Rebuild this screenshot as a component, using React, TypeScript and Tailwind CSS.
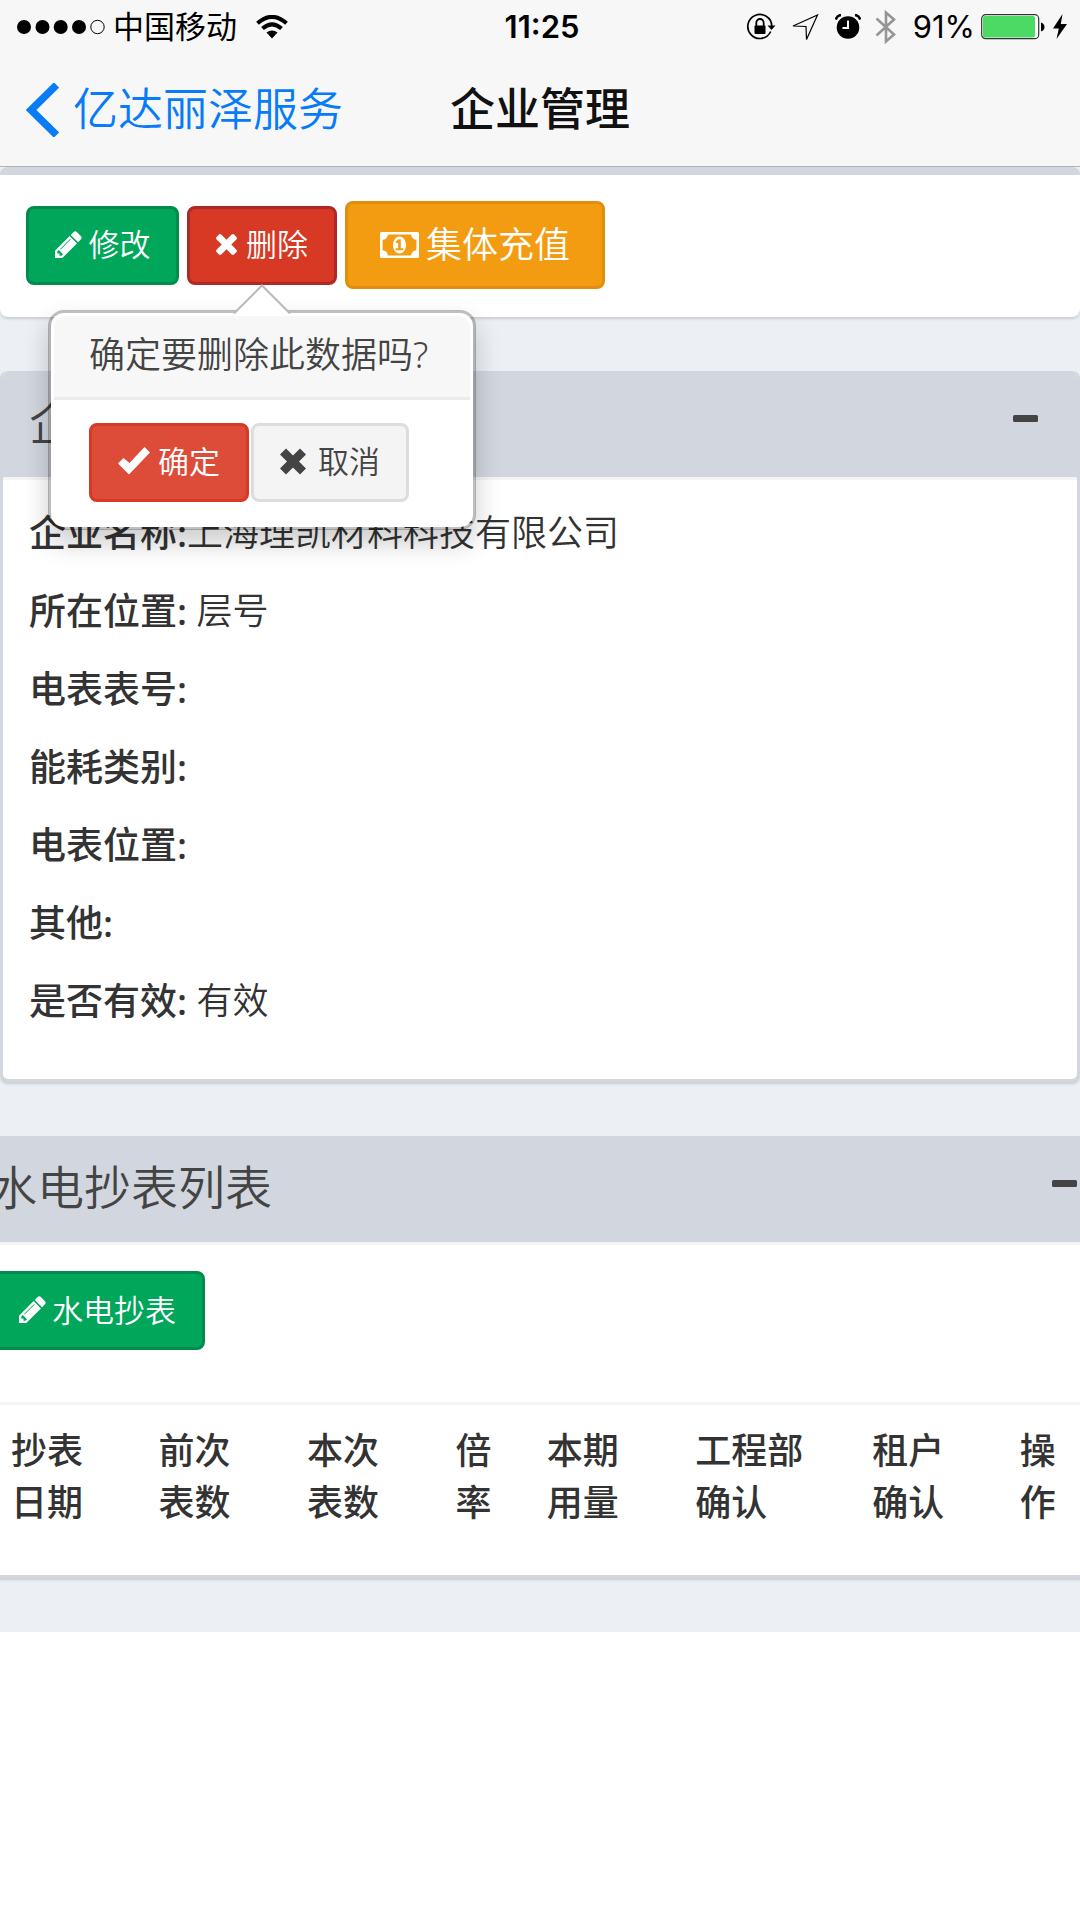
import type { ReactNode } from "react";
import { useState } from "react";

const PENCIL =
  "M491 1536l91-91-235-235-91 91v107h128v128h107zm523-928q0-22-22-22-10 0-17 7l-542 542q-7 7-7 17 0 22 22 22 10 0 17-7l542-542q7-7 7-17zm-54-192l416 416-832 832h-416v-416zm683 96q0 53-37 90l-166 166-416-416 166-165q36-38 90-38 53 0 91 38l235 234q37 39 37 91z";
const TIMES =
  "M1490 1322q0 40-28 68l-136 136q-28 28-68 28t-68-28l-294-294-294 294q-28 28-68 28t-68-28l-136-136q-28-28-28-68t28-68l294-294-294-294q-28-28-28-68t28-68l136-136q28-28 68-28t68 28l294 294 294-294q28-28 68-28t68 28l136 136q28 28 28 68t-28 68l-294 294 294 294q28 28 28 68z";
const MONEY =
  "M768 1152h384v-96h-128v-448h-114l-148 137 77 80q42-37 55-57h2v288h-128v96zm512-256q0 70-21 142t-59.5 134-101.5 101-138 39-138-39-101.5-101-59.5-134-21-142 21-142 59.5-134 101.5-101 138-39 138 39 101.5 101 59.5 134 21 142zm512 256v-512q-106 0-181-75t-75-181h-1152q0 106-75 181t-181 75v512q106 0 181 75t75 181h1152q0-106 75-181t181-75zm128-832v1152q0 26-19 45t-45 19h-1792q-26 0-45-19t-19-45v-1152q0-26 19-45t45-19h1792q26 0 45 19t19 45z";

function PencilIcon() {
  return (
    <svg viewBox="128 128 1536 1536" className="h-[27px] w-[27px]" fill="currentColor" aria-hidden="true">
      <path d={PENCIL} />
    </svg>
  );
}

function StatusBar() {
  return (
    <div className="grid h-[54px] grid-cols-[1fr_auto_1fr] items-center pl-[17px] pr-[13px] text-[31px] text-black">
      <div className="flex items-center">
        <svg width="90" height="16" viewBox="0 0 90 16" aria-label="信号">
          <circle cx="7" cy="8" r="7" />
          <circle cx="25.5" cy="8" r="7" />
          <circle cx="43.7" cy="8" r="7" />
          <circle cx="62" cy="8" r="7" />
          <circle cx="80.5" cy="8" r="6.7" fill="none" stroke="#000" strokeWidth="1" />
        </svg>
        <span className="ml-[6px]">中国移动</span>
        <svg className="ml-[19px]" width="32" height="24" viewBox="0 0 32 24" aria-label="Wi-Fi">
          <g fill="none" stroke="#000" strokeWidth="4">
            <path d="M1.500 8.300Q16-4.600 30.500 8.300" />
            <path d="M6.500 13.500Q16 5.200 25.500 13.500" />
          </g>
          <path d="M10.500 17.500Q16 13.500 21.500 17.500L16 23.500Z" />
        </svg>
      </div>
      <span className="font-semibold">11:25</span>
      <div className="flex items-center justify-end">
        <svg width="30" height="28" viewBox="0 0 30 28" aria-label="方向锁定">
          <path d="M24.700 18.500A12 12 0 1 1 25.800 13" fill="none" stroke="#000" strokeWidth="1.700" />
          <path d="M21.500 12.500h8l-4 4.500z" />
          <rect x="8.500" y="12.500" width="11" height="8.500" rx="1" />
          <path d="M10.300 13v-3a3.700 4 0 0 1 7.400 0v3" fill="none" stroke="#000" strokeWidth="1.800" />
        </svg>
        <svg className="ml-[16px]" width="27" height="27" viewBox="0 0 27 27" aria-label="定位">
          <path d="M1 12L25.500 1L14.500 25.500L14 12.500Z" fill="none" stroke="#000" strokeWidth="1.200" />
        </svg>
        <svg className="ml-[16px]" width="26" height="26" viewBox="0 0 26 26" aria-label="闹钟">
          <circle cx="13" cy="13.500" r="11.300" />
          <path d="M.8 5.600Q2 1.500 6 1M25.200 5.600Q24 1.500 20 1" fill="none" stroke="#000" strokeWidth="2.600" />
          <path d="M13 6.500v7.500H7.500" fill="none" stroke="#f7f7f7" strokeWidth="2" />
        </svg>
        <svg className="ml-[14px]" width="22" height="36" viewBox="0 0 22 36" aria-label="蓝牙">
          <path d="M1.500 9.500L19 25.500L11 32.500V3.500L19 10.500L1.500 26.500" fill="none" stroke="#959595" strokeWidth="2.600" />
        </svg>
        <span className="ml-[16px]">91%</span>
        <svg className="ml-[6px]" width="64" height="26" viewBox="0 0 64 26" aria-label="电池">
          <rect x=".7" y=".7" width="57" height="24" rx="4" fill="#fff" stroke="#333" strokeWidth="1.200" />
          <rect x="2" y="2" width="52" height="21.500" rx="2" fill="#4cd964" />
          <path d="M60 8.500q3.500 1 3.500 4.500t-3.500 4.500z" />
        </svg>
        <svg className="ml-[8px]" width="14" height="26" viewBox="0 0 14 26" aria-label="充电中">
          <path d="M9.500 0L0 14.500H5.800L3.500 25L14 10H7.800Z" />
        </svg>
      </div>
    </div>
  );
}

function NavBar() {
  return (
    <div className="grid h-[112px] grid-cols-[1fr_auto_1fr] items-center px-[26px] text-[45px]">
      <a href="#back" className="flex items-center gap-[14px] text-[#087cf7]">
        <svg width="33" height="54" viewBox="0 0 33 54" aria-hidden="true">
          <path d="M30.500 2L5 27L30.500 52" fill="none" stroke="currentColor" strokeWidth="7.500" />
        </svg>
        <span className="font-[350]">亿达丽泽服务</span>
      </a>
      <h1 className="font-medium text-[#111]">企业管理</h1>
    </div>
  );
}

function Card({ title, bleed, children }: { title: string; bleed?: boolean; children: ReactNode }) {
  const [open, setOpen] = useState(true);
  return (
    <section
      className={
        "overflow-hidden rounded-lg border-x-[3px] border-b-[3px] border-[#d2d6de] bg-white shadow-[0_2px_3px_rgba(0,0,0,0.15)] " +
        (bleed ? "-mx-[39px]" : "")
      }
    >
      <header className="flex h-[106px] items-center justify-between bg-[#d2d6de] px-[26px] pb-[4px] text-[#444]">
        <h2 className="text-[47px] leading-[52px]">{title}</h2>
        <button type="button" aria-label="折叠" onClick={() => setOpen(!open)} className="px-[12px] pb-[6px]">
          <svg width="26" height="8" viewBox="0 0 26 8" aria-hidden="true">
            <rect width="25" height="7" rx="1.500" fill="#444" />
          </svg>
        </button>
      </header>
      {open && <div className="border-t-[3px] border-[#f4f4f4] p-[26px]">{children}</div>}
    </section>
  );
}

function Popover({ onClose }: { onClose: () => void }) {
  return (
    <div
      role="dialog"
      aria-label="删除确认"
      className="absolute left-1/2 top-full z-10 mt-[25px] w-[428px] -translate-x-1/2 rounded-[16px] border-[3px] border-black/25 bg-white bg-clip-padding p-[3px] shadow-[0_13px_26px_rgba(0,0,0,0.2)]"
    >
      <svg
        className="absolute -top-[29px] left-1/2 -translate-x-1/2"
        width="58"
        height="32"
        viewBox="0 0 58 32"
        aria-hidden="true"
      >
        <path d="M2 29L29 2L56 29V32H2Z" fill="#fff" />
        <path d="M1 29.500L29 1.500L57 29.500" fill="none" stroke="#b9b9b9" strokeWidth="2" />
      </svg>
      <h3 className="rounded-t-[12px] border-b-[3px] border-[#ebebeb] bg-[#f7f7f7] px-[35px] pb-[16px] pt-[13px] text-[36px] leading-[52px] text-[#444]">
        确定要删除此数据吗?
      </h3>
      <div className="flex gap-[2px] px-[35px] pb-[22px] pt-[23px] text-[31px] leading-[46px]">
        <button
          type="button"
          onClick={onClose}
          className="flex h-[79px] w-[160px] items-center justify-center gap-[8px] rounded-lg border-[3px] border-[#d73925] bg-[#dd4b39] pb-[2px] text-white"
        >
          <svg width="32" height="28" viewBox="0 0 32 28" fill="currentColor" aria-hidden="true">
            <path d="M0 16.500L5.500 11L11.500 16L26.500 0L32 5.500L11 27.500Z" />
          </svg>
          确定
        </button>
        <button
          type="button"
          onClick={onClose}
          className="flex h-[79px] w-[158px] items-center justify-center gap-[12px] rounded-lg border-[3px] border-[#ddd] bg-[#f4f4f4] pb-[2px] text-[#444]"
        >
          <svg width="26" height="27" viewBox="0 0 26 27" aria-hidden="true">
            <path d="M3 3.500L23 23.500M23 3.500L3 23.500" stroke="currentColor" strokeWidth="8.500" />
          </svg>
          取消
        </button>
      </div>
    </div>
  );
}

const DETAILS = [
  { label: "企业名称:", value: "上海理凯材料科技有限公司" },
  { label: "所在位置:", value: " 层号" },
  { label: "电表表号:", value: "" },
  { label: "能耗类别:", value: "" },
  { label: "电表位置:", value: "" },
  { label: "其他:", value: "" },
  { label: "是否有效:", value: " 有效" },
];

const COLUMNS = [
  { lines: ["抄表", "日期"], width: "w-[13.4%]" },
  { lines: ["前次", "表数"], width: "w-[13.5%]" },
  { lines: ["本次", "表数"], width: "w-[13.5%]" },
  { lines: ["倍", "率"], width: "w-[8.3%]" },
  { lines: ["本期", "用量"], width: "w-[13.5%]" },
  { lines: ["工程部", "确认"], width: "w-[16.1%]" },
  { lines: ["租户", "确认"], width: "w-[13.4%]" },
  { lines: ["操", "作"], width: "w-auto" },
];

export default function App() {
  const [confirming, setConfirming] = useState(true);
  return (
    <div className="min-h-screen overflow-x-hidden bg-white font-['Inter','Noto_Sans_CJK_SC',sans-serif]">
      <div className="border-b border-[#b2b2b2] bg-[#f7f7f7]">
        <StatusBar />
        <NavBar />
      </div>
      <main className="flex flex-col gap-[54px] bg-[#ecf0f5] pb-[54px] font-['Noto_Sans','Noto_Sans_CJK_SC',sans-serif] font-[350] text-[#333]">
        <section className="rounded-lg border-t-[8px] border-[#d2d6de] bg-white px-[26px] pb-[28px] pt-[26px] shadow-[0_2px_3px_rgba(0,0,0,0.15)]">
          <div className="flex items-center gap-[8px] text-[31px] leading-[46px] text-white">
            <button
              type="button"
              className="flex h-[79px] w-[153px] items-center justify-center gap-[7px] rounded-lg border-[3px] border-[#008d4c] bg-[#00a65a] pb-[2px]"
            >
              <PencilIcon />
              修改
            </button>
            <div className="relative">
              <button
                type="button"
                onClick={() => setConfirming(!confirming)}
                className="flex h-[79px] w-[150px] items-center justify-center gap-[9px] rounded-lg border-[3px] border-[#ac2925] bg-[#d73925] pb-[2px]"
              >
                <svg viewBox="302 302 1188 1252" className="h-[22px] w-[21px]" fill="currentColor" aria-hidden="true">
                  <path d={TIMES} />
                </svg>
                删除
              </button>
              {confirming && <Popover onClose={() => setConfirming(false)} />}
            </div>
            <button
              type="button"
              className="flex h-[88px] w-[260px] items-center justify-center gap-[7px] rounded-lg border-[3px] border-[#e08e0b] bg-[#f39c12] text-[36px] leading-[52px]"
            >
              <svg viewBox="0 256 1920 1280" className="h-[26px] w-[39px]" fill="currentColor" aria-hidden="true">
                <path d={MONEY} />
              </svg>
              集体充值
            </button>
          </div>
        </section>

        <Card title="企业信息">
          <dl className="pt-[1px] text-[36px] leading-[52px]">
            {DETAILS.map((d) => (
              <div key={d.label} className="mb-[26px] flex whitespace-pre">
                <dt className="text-[37px] font-[550]">{d.label}</dt>
                <dd>{d.value}</dd>
              </div>
            ))}
          </dl>
        </Card>

        <Card title="水电抄表列表" bleed>
          <button
            type="button"
            className="flex h-[79px] items-center gap-[6px] rounded-lg border-[3px] border-[#008d4c] bg-[#00a65a] px-[26px] pb-[2px] text-[31px] leading-[46px] text-white"
          >
            <PencilIcon />
            水电抄表
          </button>
          <table className="mt-[52px] w-full table-fixed border-t-[3px] border-[#f4f4f4] text-left text-[36px] leading-[52px]">
            <thead>
              <tr>
                {COLUMNS.map((c) => (
                  <th key={c.lines.join("")} className={"py-[20px] pl-[21px] font-[550] " + c.width}>
                    {c.lines[0]}
                    <br />
                    {c.lines[1]}
                  </th>
                ))}
              </tr>
            </thead>
          </table>
        </Card>
      </main>
    </div>
  );
}
